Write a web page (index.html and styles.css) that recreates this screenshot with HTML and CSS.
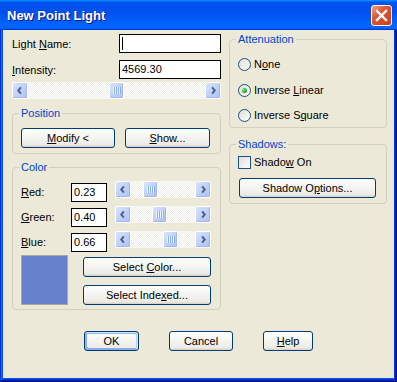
FILE: index.html
```html
<!DOCTYPE html>
<html lang="en">
<head>
    <meta charset="UTF-8">
    <title>New Point Light</title>
    <link rel="stylesheet" href="styles.css">
</head>
<body>
<div class="window">
    <div class="titlebar">
        <span class="title">New Point Light</span>
        <button class="close" title="Close">
            <svg width="13" height="13" viewBox="0 0 13 13"><path d="M2 2 11 11M11 2 2 11" stroke="#fff" stroke-width="2.4" stroke-linecap="square"/></svg>
        </button>
    </div>
    <div class="client">
        <div class="columns">
            <div class="left">
                <div class="field-row">
                    <label class="field-label">Light <u>N</u>ame:</label>
                    <div class="edit"><span class="caret"></span></div>
                </div>
                <div class="field-row">
                    <label class="field-label"><u>I</u>ntensity:</label>
                    <div class="edit">4569.30</div>
                </div>
                <div class="scrollbar wide">
                    <span class="sb-arrow"><svg width="16" height="15" viewBox="0 0 16 15"><path d="M9 4 6 7.5 9 11"/></svg></span>
                    <span class="sb-track"><span class="sb-thumb" style="margin-left: 81px"><svg width="13" height="15" viewBox="0 0 13 15"><path class="grip-hi" d="M3.5 4v7M5.5 4v7M7.5 4v7M9.5 4v7"/><path class="grip-lo" d="M4.5 4v7M6.5 4v7M8.5 4v7M10.5 4v7"/></svg></span></span>
                    <span class="sb-arrow"><svg width="16" height="15" viewBox="0 0 16 15"><path d="M7 4l3 3.5L7 11"/></svg></span>
                </div>

                <fieldset class="group position">
                    <legend>Position</legend>
                    <div class="button-row">
                        <button class="btn modify"><u>M</u>odify &lt;</button>
                        <button class="btn show"><u>S</u>how...</button>
                    </div>
                </fieldset>

                <fieldset class="group color">
                    <legend>Color</legend>
                    <div class="color-row">
                        <label class="color-label"><u>R</u>ed:</label>
                        <div class="edit small">0.23</div>
                        <div class="scrollbar">
                            <span class="sb-arrow"><svg width="16" height="15" viewBox="0 0 16 15"><path d="M9 4 6 7.5 9 11"/></svg></span>
                            <span class="sb-track"><span class="sb-thumb" style="margin-left: 12px"><svg width="13" height="15" viewBox="0 0 13 15"><path class="grip-hi" d="M3.5 4v7M5.5 4v7M7.5 4v7M9.5 4v7"/><path class="grip-lo" d="M4.5 4v7M6.5 4v7M8.5 4v7M10.5 4v7"/></svg></span></span>
                            <span class="sb-arrow"><svg width="16" height="15" viewBox="0 0 16 15"><path d="M7 4l3 3.5L7 11"/></svg></span>
                        </div>
                    </div>
                    <div class="color-row">
                        <label class="color-label"><u>G</u>reen:</label>
                        <div class="edit small">0.40</div>
                        <div class="scrollbar">
                            <span class="sb-arrow"><svg width="16" height="15" viewBox="0 0 16 15"><path d="M9 4 6 7.5 9 11"/></svg></span>
                            <span class="sb-track"><span class="sb-thumb" style="margin-left: 21px"><svg width="13" height="15" viewBox="0 0 13 15"><path class="grip-hi" d="M3.5 4v7M5.5 4v7M7.5 4v7M9.5 4v7"/><path class="grip-lo" d="M4.5 4v7M6.5 4v7M8.5 4v7M10.5 4v7"/></svg></span></span>
                            <span class="sb-arrow"><svg width="16" height="15" viewBox="0 0 16 15"><path d="M7 4l3 3.5L7 11"/></svg></span>
                        </div>
                    </div>
                    <div class="color-row">
                        <label class="color-label"><u>B</u>lue:</label>
                        <div class="edit small">0.66</div>
                        <div class="scrollbar">
                            <span class="sb-arrow"><svg width="16" height="15" viewBox="0 0 16 15"><path d="M9 4 6 7.5 9 11"/></svg></span>
                            <span class="sb-track"><span class="sb-thumb" style="margin-left: 32px"><svg width="13" height="15" viewBox="0 0 13 15"><path class="grip-hi" d="M3.5 4v7M5.5 4v7M7.5 4v7M9.5 4v7"/><path class="grip-lo" d="M4.5 4v7M6.5 4v7M8.5 4v7M10.5 4v7"/></svg></span></span>
                            <span class="sb-arrow"><svg width="16" height="15" viewBox="0 0 16 15"><path d="M7 4l3 3.5L7 11"/></svg></span>
                        </div>
                    </div>
                    <div class="swatch-row">
                        <div class="swatch"></div>
                        <div class="swatch-buttons">
                            <button class="btn">Select <u>C</u>olor...</button>
                            <button class="btn">Select Inde<u>x</u>ed...</button>
                        </div>
                    </div>
                </fieldset>
            </div>

            <div class="right">
                <fieldset class="group attenuation">
                    <legend>Attenuation</legend>
                    <div class="options">
                        <label class="option"><span class="radio"></span><span>N<u>o</u>ne</span></label>
                        <label class="option"><span class="radio checked"></span><span>Inverse <u>L</u>inear</span></label>
                        <label class="option"><span class="radio"></span><span>Inverse S<u>q</u>uare</span></label>
                    </div>
                </fieldset>

                <fieldset class="group shadows">
                    <legend>Shadows:</legend>
                    <label class="option"><span class="checkbox"></span><span>Shado<u>w</u> On</span></label>
                    <button class="btn shadow-options">Shadow O<u>p</u>tions...</button>
                </fieldset>
            </div>
        </div>

        <div class="actions">
            <button class="btn ok">OK</button>
            <button class="btn cancel">Cancel</button>
            <button class="btn help"><u>H</u>elp</button>
        </div>
    </div>
</div>
</body>
</html>
```

FILE: styles.css
```css
* {
    box-sizing: border-box;
}
body {
    margin: 0;
    font-family: "Liberation Sans", Arial, sans-serif;
    font-size: 11px;
    color: #000;
    background: #fff;
}
.window {
    width: 397px;
    height: 382px;
    display: flex;
    flex-direction: column;
    background: #0855dd;
    box-shadow: inset -1px -1px #00138c, inset 1px 1px #0831d9, inset -2px -2px #001ea0, inset 2px 2px #166aee, inset -3px -3px #003bda, inset 3px 3px #0855dd;
}
.titlebar {
    height: 30px;
    flex-shrink: 0;
    display: flex;
    align-items: center;
    justify-content: space-between;
    padding: 0 5px 0 7px;
    background: linear-gradient(180deg, #0997ff, #0053ee 8%, #0050ee 40%, #06f 88%, #06f 93%, #005bff 95%, #003dd7 96%, #003dd7);
}
.title {
    color: #fff;
    font-weight: bold;
    font-size: 13px;
    text-shadow: 1px 1px #0f1089;
    padding-top: 1px;
}
.close {
    width: 21px;
    height: 21px;
    padding: 0;
    margin-top: 1px;
    display: flex;
    align-items: center;
    justify-content: center;
    border: 1px solid #fff;
    border-radius: 3px;
    background: linear-gradient(135deg, #f0a080, #e0552f 40%, #c93d18);
}
.client {
    flex: 1;
    margin: 0 3px 4px;
    background: #ece9d8;
}
.columns {
    display: flex;
    align-items: flex-start;
    gap: 8px;
    padding: 0 7px 0 9px;
}
.left {
    width: 209px;
    padding-top: 4px;
}
.right {
    width: 158px;
    padding-top: 3px;
}

/* edit fields */
.field-row {
    display: flex;
    align-items: center;
    height: 19px;
}
.field-row + .field-row {
    margin-top: 7px;
}
.field-label {
    width: 107px;
}
.edit {
    width: 102px;
    height: 19px;
    border: 1px solid #000;
    background: #fff;
    padding: 0 2px;
    line-height: 17px;
    display: flex;
    align-items: center;
}
.edit.small {
    width: 36px;
    margin-top: 2px;
}
.caret {
    width: 1px;
    height: 13px;
    background: #000;
}

/* scrollbars */
.scrollbar {
    display: flex;
    width: 96px;
    height: 17px;
}
.scrollbar.wide {
    width: 209px;
    margin-top: 3px;
}
.sb-track {
    flex: 1;
    display: flex;
    background-color: #fff;
    background-image: conic-gradient(#eeede5 25%, #fff 0 50%, #eeede5 0 75%, #fff 0);
    background-size: 2px 2px;
}
.sb-arrow,
.sb-thumb {
    width: 16px;
    height: 17px;
    display: flex;
    align-items: center;
    justify-content: center;
    border: 1px solid #fff;
    border-radius: 2px;
    background: linear-gradient(135deg, #d8e3fd, #bccdf8 60%, #aec2f3);
    box-shadow: inset -1px -1px #a4b7e8;
}
.sb-thumb {
    width: 15px;
}
.sb-arrow path {
    fill: none;
    stroke: #4d6185;
    stroke-width: 2.2;
}
.grip-hi {
    stroke: #eef4fe;
}
.grip-lo {
    stroke: #8cb0f8;
}

/* group boxes */
.group {
    margin: 0;
    min-width: 0;
    border: 1px solid #d0d0bf;
    border-radius: 4px;
    padding: 8px 9px 5px 8px;
}
.group legend {
    color: #0046d5;
    line-height: 13px;
    padding: 0 2px;
    margin-left: -2px;
}
.position {
    margin-top: 8px;
}
.color {
    margin-top: 7px;
    padding-top: 7px;
    padding-bottom: 4px;
}
.attenuation {
    padding-top: 12px;
}
.shadows {
    margin-top: 10px;
    padding-top: 5px;
}

.button-row {
    display: flex;
    gap: 10px;
}
.btn {
    height: 20px;
    padding: 0;
    font-family: inherit;
    font-size: 11px;
    color: #000;
    border: 1px solid #003c74;
    border-radius: 3px;
    background: linear-gradient(180deg, #fff, #ecebe6 86%, #d6d0c5);
}
.modify {
    width: 94px;
}
.show {
    width: 85px;
}

.color-row {
    display: flex;
    align-items: flex-start;
    height: 21px;
}
.color-row + .color-row {
    margin-top: 4px;
}
.color-label {
    width: 50px;
    line-height: 19px;
    margin-top: 2px;
}
.color-row .scrollbar {
    margin-left: 8px;
}
.swatch-row {
    display: flex;
    margin-top: 3px;
}
.swatch {
    width: 47px;
    height: 50px;
    border: 1px solid #aca899;
    background: #6780cc;
    margin-right: 15px;
}
.swatch-buttons {
    display: flex;
    flex-direction: column;
    gap: 8px;
    margin-top: 2px;
}
.swatch-buttons .btn {
    width: 128px;
}

/* radios and checkbox */
.options {
    display: flex;
    flex-direction: column;
    gap: 12.5px;
}
.option {
    display: flex;
    align-items: center;
    height: 13px;
    line-height: 13px;
}
.radio,
.checkbox {
    width: 13px;
    height: 13px;
    margin-right: 3px;
    border: 1px solid #1c5180;
    background: linear-gradient(135deg, #dcdcd7, #fff);
    display: flex;
    align-items: center;
    justify-content: center;
}
.radio {
    border-radius: 50%;
}
.radio.checked::after {
    content: "";
    width: 5px;
    height: 5px;
    border-radius: 50%;
    background: radial-gradient(circle at 35% 35%, #8ee88e, #21a121 60%, #1a8a1a);
}
.shadow-options {
    display: block;
    width: 137px;
    margin: 9px 0 0 1px;
}

/* dialog buttons */
.actions {
    display: flex;
    gap: 30px;
    margin-top: 21px;
    padding-left: 81px;
}
.ok {
    width: 55px;
    box-shadow: inset -1px 1px #cee7ff, inset 1px 2px #98b8ea, inset -2px 2px #bcd4f6, inset 1px -1px #89ade4, inset 2px -2px #89ade4;
}
.cancel {
    width: 64px;
}
.help {
    width: 50px;
}
```
